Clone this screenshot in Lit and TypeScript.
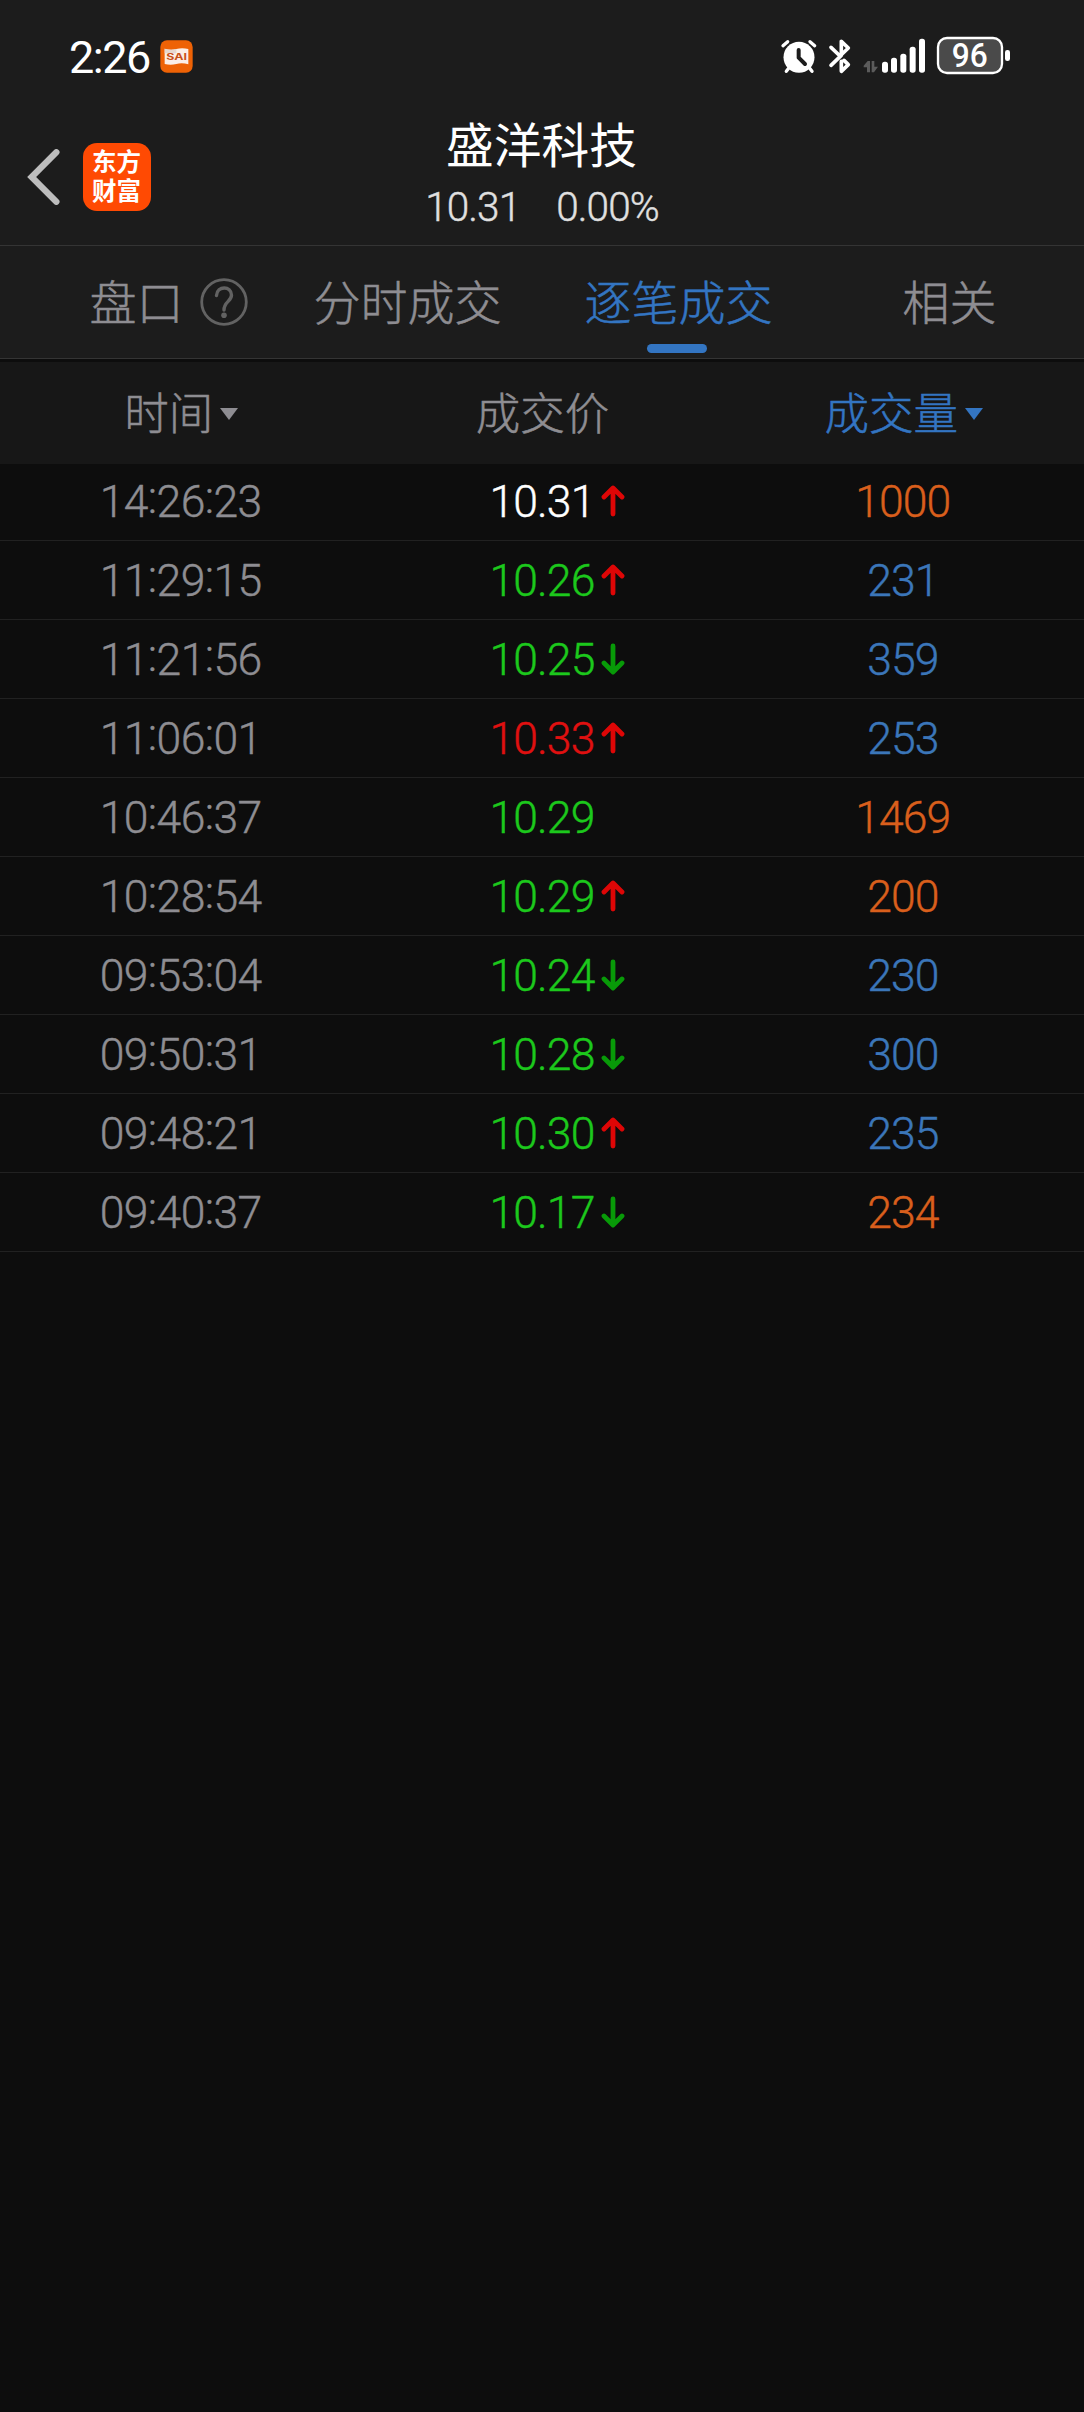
import { LitElement, html, svg, css, nothing } from "lit";
import { customElement, property } from "lit/decorators.js";
import { classMap } from "lit/directives/class-map.js";

type Direction = "up" | "down" | "";
interface Trade {
  time: string;
  price: string;
  tone: "flat" | "rise" | "fall";
  dir: Direction;
  volume: string;
  side: "buy" | "sell";
}

const TRADES: Trade[] = [
  { time: "14:26:23", price: "10.31", tone: "flat", dir: "up", volume: "1000", side: "buy" },
  { time: "11:29:15", price: "10.26", tone: "fall", dir: "up", volume: "231", side: "sell" },
  { time: "11:21:56", price: "10.25", tone: "fall", dir: "down", volume: "359", side: "sell" },
  { time: "11:06:01", price: "10.33", tone: "rise", dir: "up", volume: "253", side: "sell" },
  { time: "10:46:37", price: "10.29", tone: "fall", dir: "", volume: "1469", side: "buy" },
  { time: "10:28:54", price: "10.29", tone: "fall", dir: "up", volume: "200", side: "buy" },
  { time: "09:53:04", price: "10.24", tone: "fall", dir: "down", volume: "230", side: "sell" },
  { time: "09:50:31", price: "10.28", tone: "fall", dir: "down", volume: "300", side: "sell" },
  { time: "09:48:21", price: "10.30", tone: "fall", dir: "up", volume: "235", side: "sell" },
  { time: "09:40:37", price: "10.17", tone: "fall", dir: "down", volume: "234", side: "buy" },
];

@customElement("status-bar")
class StatusBar extends LitElement {
  static styles = css`
    :host { display: flex; height: 112px; padding: 0 70px 0 69px; box-sizing: border-box; justify-content: space-between; align-items: flex-start; }
    .left, .right { display: flex; align-items: flex-start; }
    .clock { font-size: 45px; line-height: 52px; margin-top: 32px; color: #fff; letter-spacing: -1.5px; width: 91px; white-space: nowrap; }
    .app { margin-top: 40px; width: 33px; height: 33px; display: block; }
    .sai { font: 700 25px Inter, sans-serif; }
    .right { padding-top: 34px; }
    .right svg { display: block; height: 42px; }
    .level { font: 500 98px Roboto, sans-serif; }
  `;
  render() {
    return html`
      <div class="left">
        <span class="clock">2:26</span>
        <svg class="app" viewBox="0 0 99 99">
          <rect x="1" y="1" width="97" height="97" rx="20" fill="#ee6205"></rect>
          <path d="M14 26 Q32 32 49 27 Q66 22 85 27 V73 Q66 67 49 72 Q32 77 14 72Z" fill="#fbeee6"></path>
          <path d="M14 26 Q32 32 49 27 V40 H14Z" fill="#e6d8d0"></path>
          <text class="sai" x="50" y="59" text-anchor="middle" textLength="62" lengthAdjust="spacingAndGlyphs" fill="#c8511a">SAI</text>
        </svg>
      </div>
      <div class="right">
        <svg width="234" viewBox="120 42 702 126">
          <g fill="none" stroke="#fff" stroke-linecap="round" stroke-width="10">
            <path d="M129 77 L143 65 M224 77 L210 65"></path>
            <path d="M146 145 L139 154 M209 145 L216 154"></path>
          </g>
          <circle cx="177" cy="112" r="46.5" fill="#fff"></circle>
          <path d="M176 90 V113 L195 132" fill="none" stroke="#1c1c1c" stroke-width="12" stroke-linecap="round" stroke-linejoin="round"></path>
          <path d="M273 82 L300 108 L325 84 L304 64 V104 M273 136 L304 106 M304 124 V154 L325 134 L312 121" fill="none" stroke="#fff" stroke-width="11" stroke-linecap="round" stroke-linejoin="round"></path>
          <path d="M371 142 V137 L383 123 H390 V157 H381 V142Z M395 123 H403 V140 H414 L402 157 H395Z" fill="#5b5b5b"></path>
          <g fill="#fff">
            <rect x="426" y="125" width="18" height="33" rx="8"></rect>
            <rect x="453" y="113" width="18" height="45" rx="8"></rect>
            <rect x="481" y="101" width="18" height="57" rx="8"></rect>
            <rect x="509" y="80" width="18" height="78" rx="8"></rect>
            <rect x="537" y="56" width="18" height="102" rx="8"></rect>
            <rect x="795" y="90" width="15" height="33" rx="7"></rect>
          </g>
          <rect x="594" y="54" width="192" height="105" rx="27" fill="#4a4a4a" stroke="#fff" stroke-width="7"></rect>
          <text class="level" x="689" y="141" text-anchor="middle" textLength="108" lengthAdjust="spacingAndGlyphs" fill="#fff">96</text>
        </svg>
      </div>`;
  }
}

@customElement("stock-header")
class StockHeader extends LitElement {
  static styles = css`
    :host { display: grid; grid-template-columns: 1fr auto 1fr; height: 134px; box-sizing: border-box; border-bottom: 1px solid #343434; }
    .nav { display: flex; align-items: center; padding: 0 0 3px 26px; gap: 23px; }
    .back { width: 34px; height: 56px; display: block; }
    .logo { width: 68px; height: 68px; box-sizing: border-box; border-radius: 14px; background: #ff4a03; color: #fff; font: 700 24.5px/29px "Noto Sans CJK SC", sans-serif; padding: 3px 8px 0 9px; word-break: break-all; }
    .middle { display: flex; flex-direction: column; align-items: center; }
    .name { font-size: 47.7px; line-height: 56px; margin: 7px 1px 0 0; color: #fff; }
    .quote { font-size: 40.5px; line-height: 48px; margin-top: 8px; color: #e0e0e0; display: flex; gap: 36px; letter-spacing: -0.9px; font-weight: 300; -webkit-text-stroke: 0.4px #e0e0e0; }
  `;
  render() {
    return html`
      <div class="nav">
        <svg class="back" viewBox="0 0 102 168"><path d="M91 10 L17 84 L91 158" fill="none" stroke="#bdbdbd" stroke-width="19" stroke-linecap="round"></path></svg>
        <div class="logo">东方财富</div>
      </div>
      <div class="middle">
        <div class="name">盛洋科技</div>
        <div class="quote"><span>10.31</span><span>0.00%</span></div>
      </div>`;
  }
}

@customElement("tab-strip")
class TabStrip extends LitElement {
  @property({ type: Number }) active = 2;
  static styles = css`
    :host { display: grid; grid-template-columns: repeat(4, 1fr); height: 113px; box-sizing: border-box; border-bottom: 1px solid #343434; }
    .tab { display: flex; flex-direction: column; align-items: center; font-size: 47px; line-height: 56px; padding-top: 30px; color: #8e8d92; font-weight: 300; -webkit-text-stroke: 0.5px currentColor; }
    .tab.active { color: #3375c2; }
    .label { display: flex; align-items: center; padding-left: 2px; }
    .help { width: 48px; height: 48px; margin: -5px -64px 0 16px; display: block; }
    .bar { width: 60px; height: 9px; border-radius: 5px; background: #3375c2; margin: 12px 1px 0 0; }
  `;
  render() {
    return html`${["盘口", "分时成交", "逐笔成交", "相关"].map(
      (name, i) => html`
        <div class=${classMap({ tab: true, active: i === this.active })}>
          <div class="label">
            <span>${name}</span>
            ${i === 0
              ? html`<svg class="help" viewBox="0 0 48 48" fill="none" stroke="#626262">
                  <circle cx="24" cy="24" r="22.3" stroke-width="2.8"></circle>
                  <path d="M16.5 17.5 C17 7.5 31.5 7.5 31.5 17 C31.5 23.5 24 23.5 24 32" stroke-width="3.4" stroke-linecap="round"></path>
                  <circle cx="24" cy="37.2" r="2.8" fill="#626262" stroke="none"></circle>
                </svg>`
              : nothing}
          </div>
          ${i === this.active ? html`<div class="bar"></div>` : nothing}
        </div>`
    )}`;
  }
}

@customElement("trade-table")
class TradeTable extends LitElement {
  static styles = css`
    :host { display: block; padding-top: 3px; }
    .head, .row { display: grid; grid-template-columns: repeat(3, 1fr); }
    .cell { display: flex; justify-content: center; align-items: center; }
    .head { height: 102px; background: #171717; color: #8e8d92; font-size: 44.5px; line-height: 54px; font-weight: 300; -webkit-text-stroke: 0.5px currentColor; }
    .head .cell { gap: 7px; padding: 2px 0 0 1px; }
    .head .sorted { color: #3375c2; }
    .caret { width: 18px; height: 12px; display: block; }
    .row { height: 79px; box-sizing: border-box; border-bottom: 1px solid #212121; font-size: 44.5px; line-height: 52px; letter-spacing: -0.9px; font-weight: 300; -webkit-text-stroke: 0.4px currentColor; }
    .row:nth-child(2) { height: 77px; }
    .row:nth-child(2) .cell { padding-bottom: 2px; }
    .cell span { margin-top: 2px; }
    .time { color: #8e8d92; }
    .time span { letter-spacing: -0.6px; }
    .time i { font-style: normal; position: relative; top: -4px; }
    .flat { color: #fff; }
    .rise { color: #e01010; }
    .fall { color: #1cc81c; }
    .buy { color: #d95f1c; }
    .sell { color: #3b76b9; }
    .buy, .sell { padding-right: 1px; }
    .arrow { width: 24px; height: 32px; margin: 0 -31px 0 7px; display: block; }
  `;
  private arrow(dir: Direction) {
    if (!dir) return nothing;
    const up = dir === "up";
    const shape = up
      ? svg`<path d="M12 4 V29 M3 12 L12 3 L21 12"></path>`
      : svg`<path d="M12 3 V28 M3 20 L12 29 L21 20"></path>`;
    return html`<svg class="arrow" viewBox="0 0 24 32" fill="none" stroke=${up ? "#de0606" : "#089a08"} stroke-width="4.8" stroke-linecap="round" stroke-linejoin="round">${shape}</svg>`;
  }
  private time(value: string) {
    const [h, m, s] = value.split(":");
    return html`<span>${h}<i>:</i>${m}<i>:</i>${s}</span>`;
  }
  render() {
    const caret = html`<svg class="caret" viewBox="0 0 18 12"><path d="M0 0 H18 L9 12Z" fill="currentColor"></path></svg>`;
    return html`
      <div class="head">
        <div class="cell"><span>时间</span>${caret}</div>
        <div class="cell"><span>成交价</span></div>
        <div class="cell sorted"><span>成交量</span>${caret}</div>
      </div>
      ${TRADES.map(
        (t) => html`<div class="row">
          <div class="cell time">${this.time(t.time)}</div>
          <div class="cell ${t.tone}"><span>${t.price}</span>${this.arrow(t.dir)}</div>
          <div class="cell ${t.side}"><span>${t.volume}</span></div>
        </div>`
      )}`;
  }
}

@customElement("app-root")
class AppRoot extends LitElement {
  static styles = css`
    :host { display: block; min-height: 2412px; background: #0d0d0d; font-family: Roboto, "Noto Sans CJK SC", sans-serif; }
    .top { background: #1c1c1c; }
  `;
  render() {
    return html`
      <div class="top">
        <status-bar></status-bar>
        <stock-header></stock-header>
        <tab-strip></tab-strip>
      </div>
      <trade-table></trade-table>`;
  }
}
